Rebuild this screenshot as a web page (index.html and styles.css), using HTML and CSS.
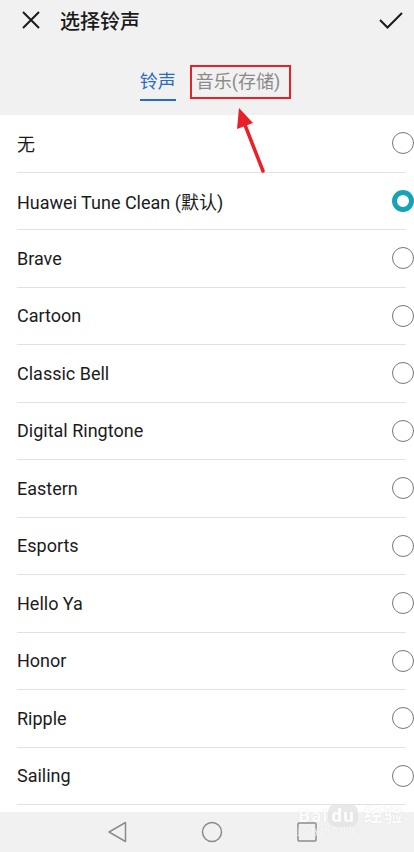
FILE: index.html
```html
<!DOCTYPE html>
<html lang="zh-CN">
<head>
    <meta charset="UTF-8">
    <meta name="viewport" content="width=device-width, initial-scale=1.0">
    <title>选择铃声</title>
    <link rel="stylesheet" href="styles.css">
</head>
<body>
    <div class="page">
        <div class="header">
            <div class="titlebar">
                <svg class="icon-close" width="20" height="20" viewBox="0 0 20 20">
                    <path d="M2 2 L18 18 M18 2 L2 18" stroke="#1a1a1a" stroke-width="2" fill="none"/>
                </svg>
                <h1>选择铃声</h1>
                <svg class="icon-check" width="24" height="18" viewBox="0 0 24 18">
                    <path d="M1 8 L8.5 15.5 L23 1" stroke="#1a1a1a" stroke-width="2" fill="none"/>
                </svg>
            </div>
            <div class="tabs">
                <div class="tab active">铃声</div>
                <div class="tab">音乐(存储)</div>
            </div>
        </div>

        <ul class="list">
            <li class="item"><span>无</span><i class="radio"></i></li>
            <li class="item"><span>Huawei Tune Clean (默认)</span><i class="radio checked"></i></li>
            <li class="item"><span>Brave</span><i class="radio"></i></li>
            <li class="item"><span>Cartoon</span><i class="radio"></i></li>
            <li class="item"><span>Classic Bell</span><i class="radio"></i></li>
            <li class="item"><span>Digital Ringtone</span><i class="radio"></i></li>
            <li class="item"><span>Eastern</span><i class="radio"></i></li>
            <li class="item"><span>Esports</span><i class="radio"></i></li>
            <li class="item"><span>Hello Ya</span><i class="radio"></i></li>
            <li class="item"><span>Honor</span><i class="radio"></i></li>
            <li class="item"><span>Ripple</span><i class="radio"></i></li>
            <li class="item"><span>Sailing</span><i class="radio"></i></li>
        </ul>

        <div class="navbar">
            <svg width="22" height="22" viewBox="0 0 22 22">
                <path d="M19.5 1.5 L19.5 20.5 L3 11 Z" stroke="#8c8c8c" stroke-width="1.5" fill="none" stroke-linejoin="round"/>
            </svg>
            <svg width="22" height="22" viewBox="0 0 22 22">
                <circle cx="11" cy="11" r="9.5" stroke="#8c8c8c" stroke-width="1.5" fill="none"/>
            </svg>
            <svg width="22" height="22" viewBox="0 0 22 22">
                <rect x="2" y="2" width="18" height="18" rx="1" stroke="#8c8c8c" stroke-width="1.5" fill="none"/>
            </svg>
        </div>

        <!-- annotation on top of the screenshot -->
        <div class="mark-box"></div>
        <svg class="mark-arrow" width="40" height="70" viewBox="0 0 40 70">
            <path d="M31 66 L13 20" stroke="#e8202a" stroke-width="3.5" fill="none" stroke-linecap="round"/>
            <path d="M7 3 L5 24 L21 18 Z" fill="#e8202a"/>
        </svg>

        <div class="watermark">
            <div class="wm-logo">Bai<b>du</b> 经验</div>
            <div class="wm-url">jingyan.baidu.com</div>
        </div>
    </div>
</body>
</html>
```

FILE: styles.css
```css
* {
    box-sizing: border-box;
    margin: 0;
    padding: 0;
}

body {
    font-family: Roboto, "Noto Sans CJK SC", sans-serif;
    background-color: #ffffff;
    color: #1a1a1a;
}

.page {
    position: relative;
    width: 414px;
    height: 852px;
    overflow: hidden;
}

.header {
    background-color: #f1f1f1;
    height: 115px;
}

.titlebar {
    display: flex;
    align-items: center;
    height: 40px;
    padding: 0 11px 0 21px;
}

.titlebar h1 {
    flex: 1;
    font-size: 20px;
    font-weight: 500;
    margin-left: 19px;
    color: #1a1a1a;
}

.icon-check {
    margin-top: 1px;
}

.tabs {
    display: flex;
    justify-content: center;
    gap: 20px;
    padding: 31px 0 0 6px;
}

.tab {
    font-size: 18px;
    line-height: 22px;
    color: #8a8a8a;
    padding-bottom: 6px;
    border-bottom: 2px solid transparent;
}

.tab.active {
    color: #2a6bc4;
    border-bottom-color: #2a6bc4;
}

.list {
    list-style: none;
    padding-bottom: 7px;
}

.item {
    display: flex;
    align-items: center;
    justify-content: space-between;
    height: 57.5px;
    margin: 0 8px 0 17px;
    border-bottom: 1px solid #e2e2e2;
    font-size: 18px;
    color: #1b1b1b;
}

.radio {
    display: block;
    width: 22px;
    height: 22px;
    margin-right: -8px;
    border: 1.5px solid #777777;
    border-radius: 50%;
}

.radio.checked {
    border: 5.5px solid #17a3b6;
}

.navbar {
    display: flex;
    align-items: center;
    justify-content: center;
    gap: 73px;
    height: 40px;
    background-color: #f1f1f1;
    padding-left: 9px;
}

.mark-box {
    position: absolute;
    left: 190px;
    top: 65px;
    width: 101px;
    height: 34px;
    border: 2px solid #e8202a;
}

.mark-arrow {
    position: absolute;
    left: 232px;
    top: 105px;
}

.watermark {
    position: absolute;
    left: 298px;
    top: 800px;
    color: #ffffff;
    text-shadow: 0 0 1px #d0d0d0;
    opacity: 0.8;
}

.wm-logo {
    font-size: 19px;
    font-weight: bold;
    letter-spacing: 1px;
}

.wm-logo b {
    background-color: #e4e4e4;
    border-radius: 8px;
    padding: 0 3px;
}

.wm-url {
    font-size: 10px;
    margin-top: -2px;
}
```
